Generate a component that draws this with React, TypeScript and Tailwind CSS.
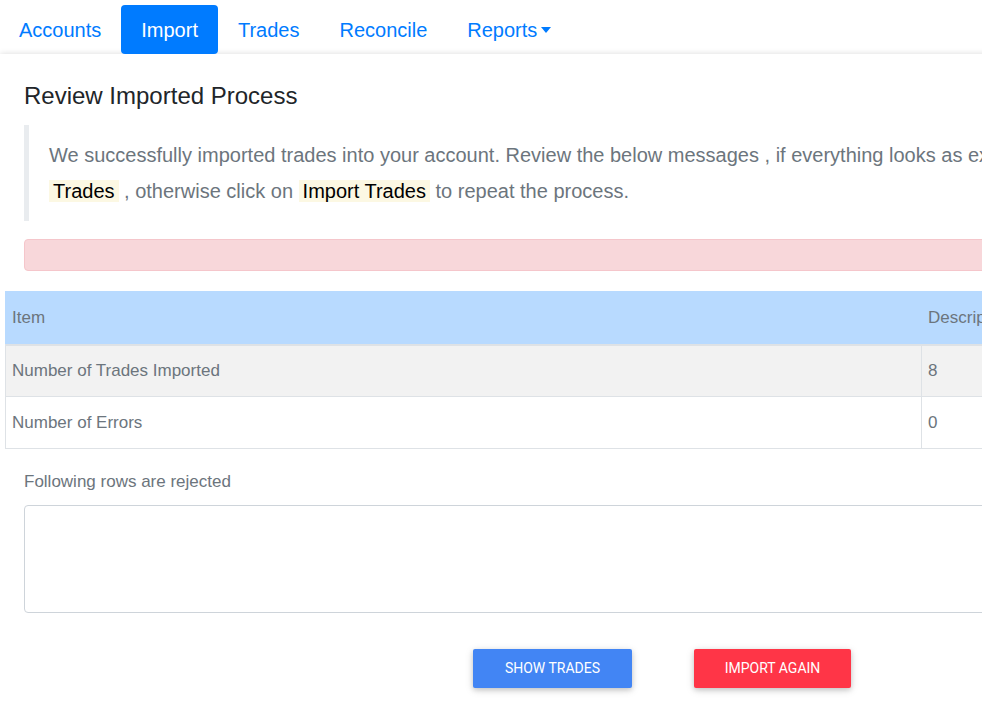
export default function App() {
  const f = { fontFamily: '"Liberation Sans", Arial, sans-serif' };
  return (
    <div className="w-[982px] h-[707px] overflow-hidden bg-white" style={f}>
      <nav className="flex items-center h-[54px] pl-[5px] pt-[5px] text-[20px] text-[#007bff]">
        <a className="px-[14px] h-[49px] flex items-center">Accounts</a>
        <a className="ml-[6px] px-[20px] h-[49px] flex items-center bg-[#007bff] text-white rounded-[4px]">Import</a>
        <a className="ml-[0px] px-[20px] h-[49px] flex items-center">Trades</a>
        <a className="px-[20px] h-[49px] flex items-center">Reconcile</a>
        <a className="px-[20px] h-[49px] flex items-center gap-1">Reports<span className="inline-block w-0 h-0 border-l-[5px] border-r-[5px] border-t-[6px] border-l-transparent border-r-transparent border-t-[#007bff]" /></a>
      </nav>
      <div className="w-[1400px] shadow-[0_0_6px_rgba(0,0,0,0.15)] pt-[27px] pb-[40px]">
        <h1 className="ml-[24px] text-[24px] leading-[30px] text-[#212529]">Review Imported Process</h1>
        <div className="ml-[24px] mt-[14px] border-l-[5px] border-[#e9ecef] pl-[20px] py-[12px] text-[20px] leading-[36px] text-[#6c757d] whitespace-nowrap">
          <div>We successfully imported trades into your account. Review the below messages , if everything looks as expected, click on <mark className="bg-[#fcf8e3] text-black px-[4px]">Show</mark></div>
          <div><mark className="bg-[#fcf8e3] text-black px-[4px]">Trades</mark> , otherwise click on <mark className="bg-[#fcf8e3] text-black px-[4px]">Import Trades</mark> to repeat the process.</div>
        </div>
        <div className="ml-[24px] mt-[18px] h-[32px] bg-[#f8d7da] border border-[#f5c6cb] rounded-[4px]" />
        <table className="ml-[5px] mt-[20px] w-[1300px] border-collapse text-[17px] text-[#6c757d]">
          <thead>
            <tr className="bg-[#b8daff] h-[53px]">
              <th className="text-left font-normal pl-[6px] w-[916px] border border-[#b8daff] border-b-2 border-b-[#dee2e6]">Item</th>
              <th className="text-left font-normal pl-[6px] border border-[#b8daff] border-l-[#dee2e6] border-b-2 border-b-[#dee2e6]">Description</th>
            </tr>
          </thead>
          <tbody>
            <tr className="bg-[#f2f2f2] h-[52px]">
              <td className="pl-[6px] border border-[#dee2e6]">Number of Trades Imported</td>
              <td className="pl-[6px] border border-[#dee2e6]">8</td>
            </tr>
            <tr className="h-[52px]">
              <td className="pl-[6px] border border-[#dee2e6]">Number of Errors</td>
              <td className="pl-[6px] border border-[#dee2e6]">0</td>
            </tr>
          </tbody>
        </table>
        <div className="ml-[24px] mt-[20px] text-[17px] text-[#6c757d]">Following rows are rejected</div>
        <div className="ml-[24px] mt-[10px] h-[108px] border border-[#ced4da] rounded-[4px]" />
        <div className="ml-[473px] mt-[36px] flex gap-[62px] text-[14px] text-white" style={{ fontFamily: 'Roboto, sans-serif' }}>
          <button className="w-[159px] h-[39px] bg-[#4285f4] rounded-[2px] shadow-[0_2px_5px_rgba(0,0,0,0.16),0_2px_10px_rgba(0,0,0,0.12)]">SHOW TRADES</button>
          <button className="w-[157px] h-[39px] bg-[#ff3547] rounded-[2px] shadow-[0_2px_5px_rgba(0,0,0,0.16),0_2px_10px_rgba(0,0,0,0.12)]">IMPORT AGAIN</button>
        </div>
      </div>
    </div>
  );
}
